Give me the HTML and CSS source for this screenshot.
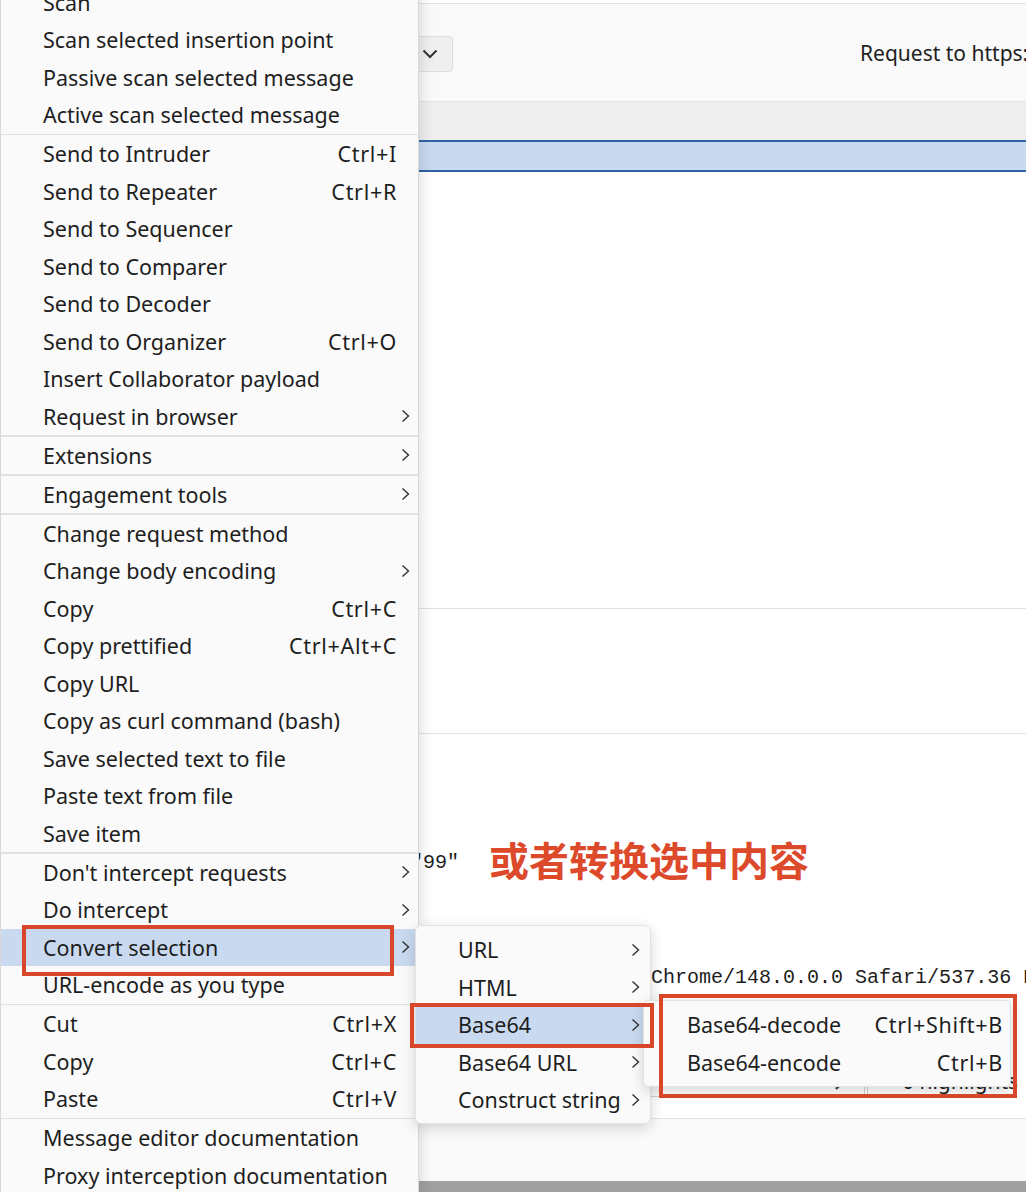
FILE: index.html
```html
<!DOCTYPE html>
<html lang="zh-CN">
<head>
  <meta charset="UTF-8" />
  <meta name="viewport" content="width=device-width, initial-scale=1.0"/>
  <title>Proxy - Intercept</title>
  <link rel="stylesheet" href="styles.css">
</head>
<body>
  <!-- proxy window behind the menus -->
  <div class="app">
    <div class="toolbar">
      <div class="dropdown">
        <svg width="16" height="10" viewBox="0 0 16 10"><polyline points="1.5,1.5 8,8 14.5,1.5" fill="none" stroke="#333" stroke-width="2"/></svg>
      </div>
      <div class="req-title">Request to https://www.example.com:443 [93.184.216.34]</div>
    </div>
    <div class="table-head"></div>
    <div class="table-row selected"></div>
    <div class="table-body"></div>
    <div class="inspector"></div>
    <div class="editor">
      <div class="line">GET / HTTP/2</div>
      <div class="line">Host: example</div>
      <div class="line">Cookie: a=1</div>
      <div class="line">Sec-Ch-Ua: </div>
      <div class="line">", "Not/A)Brand";v="99"</div>
      <div class="line">DNT: 1</div>
      <div class="line">Priority: u=0</div>
      <div class="line">User-Agent: Mozilla/5.0 (Windows NT</div>
      <div class="line">AppleWebKit/537.36 (KHTML, like Gecko) Chrome/148.0.0.0 Safari/537.36 Edg/148.0.0.0</div>
      <div class="line">Accept: */*</div>
    </div>
    <div class="search-row">
      <div class="search-box">
        <span class="search-text">Search</span>
        <svg class="search-icon" width="24" height="24" viewBox="0 0 24 24"><circle cx="14" cy="10" r="7" fill="none" stroke="#444" stroke-width="2"/><line x1="9" y1="15" x2="2" y2="22" stroke="#444" stroke-width="2.4"/></svg>
      </div>
      <div class="highlights">0 highlights</div>
    </div>
    <div class="status"></div>
    <div class="scroll-bar"></div>
  </div>

  <!-- context menu -->
  <div class="menu main-menu">
    <div class="item"><span>Scan</span></div>
    <div class="item"><span>Scan selected insertion point</span></div>
    <div class="item"><span>Passive scan selected message</span></div>
    <div class="item"><span>Active scan selected message</span></div>
    <div class="sep"></div>
    <div class="item"><span>Send to Intruder</span><span class="key">Ctrl+I</span></div>
    <div class="item"><span>Send to Repeater</span><span class="key">Ctrl+R</span></div>
    <div class="item"><span>Send to Sequencer</span></div>
    <div class="item"><span>Send to Comparer</span></div>
    <div class="item"><span>Send to Decoder</span></div>
    <div class="item"><span>Send to Organizer</span><span class="key">Ctrl+O</span></div>
    <div class="item"><span>Insert Collaborator payload</span></div>
    <div class="item sub"><span>Request in browser</span><span class="key"></span><svg class="arrow" width="9" height="14" viewBox="0 0 9 14"><polyline points="1.5,1.5 7.5,7 1.5,12.5"/></svg></div>
    <div class="sep"></div>
    <div class="item sub"><span>Extensions</span><span class="key"></span><svg class="arrow" width="9" height="14" viewBox="0 0 9 14"><polyline points="1.5,1.5 7.5,7 1.5,12.5"/></svg></div>
    <div class="sep"></div>
    <div class="item sub"><span>Engagement tools</span><span class="key"></span><svg class="arrow" width="9" height="14" viewBox="0 0 9 14"><polyline points="1.5,1.5 7.5,7 1.5,12.5"/></svg></div>
    <div class="sep"></div>
    <div class="item"><span>Change request method</span></div>
    <div class="item sub"><span>Change body encoding</span><span class="key"></span><svg class="arrow" width="9" height="14" viewBox="0 0 9 14"><polyline points="1.5,1.5 7.5,7 1.5,12.5"/></svg></div>
    <div class="item"><span>Copy</span><span class="key">Ctrl+C</span></div>
    <div class="item"><span>Copy prettified</span><span class="key">Ctrl+Alt+C</span></div>
    <div class="item"><span>Copy URL</span></div>
    <div class="item"><span>Copy as curl command (bash)</span></div>
    <div class="item"><span>Save selected text to file</span></div>
    <div class="item"><span>Paste text from file</span></div>
    <div class="item"><span>Save item</span></div>
    <div class="sep"></div>
    <div class="item sub"><span>Don't intercept requests</span><span class="key"></span><svg class="arrow" width="9" height="14" viewBox="0 0 9 14"><polyline points="1.5,1.5 7.5,7 1.5,12.5"/></svg></div>
    <div class="item sub"><span>Do intercept</span><span class="key"></span><svg class="arrow" width="9" height="14" viewBox="0 0 9 14"><polyline points="1.5,1.5 7.5,7 1.5,12.5"/></svg></div>
    <div class="item sub active"><span>Convert selection</span><span class="key"></span><svg class="arrow" width="9" height="14" viewBox="0 0 9 14"><polyline points="1.5,1.5 7.5,7 1.5,12.5"/></svg></div>
    <div class="item"><span>URL-encode as you type</span></div>
    <div class="sep"></div>
    <div class="item"><span>Cut</span><span class="key">Ctrl+X</span></div>
    <div class="item"><span>Copy</span><span class="key">Ctrl+C</span></div>
    <div class="item"><span>Paste</span><span class="key">Ctrl+V</span></div>
    <div class="sep"></div>
    <div class="item"><span>Message editor documentation</span></div>
    <div class="item"><span>Proxy interception documentation</span></div>
  </div>

  <!-- Convert selection submenu -->
  <div class="menu convert-menu">
    <div class="item sub"><span>URL</span><span class="key"></span><svg class="arrow" width="9" height="14" viewBox="0 0 9 14"><polyline points="1.5,1.5 7.5,7 1.5,12.5"/></svg></div>
    <div class="item sub"><span>HTML</span><span class="key"></span><svg class="arrow" width="9" height="14" viewBox="0 0 9 14"><polyline points="1.5,1.5 7.5,7 1.5,12.5"/></svg></div>
    <div class="item sub active"><span>Base64</span><span class="key"></span><svg class="arrow" width="9" height="14" viewBox="0 0 9 14"><polyline points="1.5,1.5 7.5,7 1.5,12.5"/></svg></div>
    <div class="item sub"><span>Base64 URL</span><span class="key"></span><svg class="arrow" width="9" height="14" viewBox="0 0 9 14"><polyline points="1.5,1.5 7.5,7 1.5,12.5"/></svg></div>
    <div class="item sub"><span>Construct string</span><span class="key"></span><svg class="arrow" width="9" height="14" viewBox="0 0 9 14"><polyline points="1.5,1.5 7.5,7 1.5,12.5"/></svg></div>
  </div>

  <!-- Base64 submenu -->
  <div class="menu base64-menu">
    <div class="item"><span>Base64-decode</span><span class="key">Ctrl+Shift+B</span></div>
    <div class="item"><span>Base64-encode</span><span class="key">Ctrl+B</span></div>
  </div>

  <!-- annotations -->
  <div class="mark mark-convert"></div>
  <div class="mark mark-base64"></div>
  <div class="mark mark-actions"></div>
  <div class="note">或者转换选中内容</div>
</body>
</html>
```

FILE: styles.css
```css
* {
  box-sizing: border-box;
}
html, body {
  margin: 0;
}
body {
  position: relative;
  width: 1026px;
  height: 1192px;
  overflow: hidden;
  background: #fff;
  font-family: "Noto Sans", "Open Sans", sans-serif;
  font-size: 21.5px;
  color: #1e1e1e;
}

/* proxy window */
.app {
  display: flex;
  flex-direction: column;
  height: 1192px;
}
.toolbar {
  display: flex;
  align-items: center;
  height: 99px;
  margin-top: 3px;
  padding-left: 380px;
  background: #f9f9f9;
  border-top: 1px solid #e3e3e3;
  border-bottom: 1px solid #e3e3e3;
  white-space: nowrap;
  overflow: hidden;
}
.dropdown {
  flex: none;
  display: flex;
  align-items: center;
  justify-content: flex-end;
  width: 73px;
  height: 36px;
  margin-top: 3px;
  padding-right: 14px;
  background: #efefef;
  border: 1px solid #dedede;
  border-radius: 4px;
}
.req-title {
  flex: none;
  margin-left: 407px;
  font-size: 21px;
}
.table-head {
  height: 38px;
  background: #eeeeee;
}
.table-row.selected {
  height: 32px;
  background: #c9daf0;
  border-top: 2px solid #2c65a1;
  border-bottom: 2px solid #2c65a1;
}
.table-body {
  height: 437px;
  border-bottom: 1px solid #e3e3e3;
}
.inspector {
  height: 125px;
  border-bottom: 1px solid #e3e3e3;
}
.editor {
  height: 316px;
  padding-left: 183px;
  font-family: "Liberation Mono", monospace;
  font-size: 20px;
  overflow: hidden;
}
.line {
  height: 28.75px;
  line-height: 28.75px;
  white-space: pre;
}
.search-row {
  display: flex;
  align-items: flex-end;
  height: 69px;
  padding-left: 182px;
  padding-bottom: 21px;
  border-bottom: 1px solid #e3e3e3;
}
.search-box {
  flex: none;
  display: flex;
  align-items: center;
  justify-content: space-between;
  width: 683px;
  height: 42px;
  padding: 0 6px 0 10px;
  border: 1px solid #d4d4d4;
  border-radius: 3px;
  color: #888;
}
.search-icon {
  margin-top: 6px;
}
.highlights {
  flex: none;
  height: 42px;
  margin-left: 2px;
  padding: 12px 0 0 34px;
  border-left: 1px solid #d4d4d4;
  font-size: 21px;
  line-height: 28px;
}
.status {
  height: 62px;
  background: #fafafa;
}
.scroll-bar {
  flex: 1;
  background: #a0a0a0;
}

/* menus */
.menu {
  position: absolute;
  background: #fafafa;
  box-shadow: 0 4px 14px rgba(0, 0, 0, 0.16);
}
.item {
  display: grid;
  grid-template-columns: 1fr auto 21px;
  align-items: center;
  height: 37.5px;
  white-space: nowrap;
}
.key {
  text-align: right;
  letter-spacing: 0.7px;
}
.arrow {
  margin-left: 4px;
}
.arrow polyline {
  fill: none;
  stroke: #333;
  stroke-width: 1.4;
}
.item.active {
  background: #c9daf0;
}
.sep {
  height: 1.5px;
  background: #e1e1e1;
}
.main-menu {
  left: 0;
  top: -16.5px;
  width: 419px;
  border-left: 1px solid #d8d8d8;
  border-right: 1px solid #d8d8d8;
}
.main-menu .item {
  padding-left: 42px;
}
.convert-menu {
  left: 415px;
  top: 925px;
  width: 236px;
  padding: 5px 0 4px;
  border: 1px solid #e2e2e2;
  border-radius: 6px;
}
.convert-menu .item {
  padding-left: 42px;
  padding-right: 2px;
}
.base64-menu {
  left: 643px;
  top: 1000px;
  width: 368px;
  padding: 5px 0;
  border: 1px solid #e2e2e2;
  border-radius: 6px;
}
.base64-menu .item {
  grid-template-columns: 1fr auto;
  padding-left: 43px;
  padding-right: 7px;
}

/* red callouts */
.mark {
  position: absolute;
  border: 4px solid #d9472b;
}
.mark-convert {
  left: 22px;
  top: 925px;
  width: 372px;
  height: 51px;
}
.mark-base64 {
  left: 410px;
  top: 1003px;
  width: 244px;
  height: 45px;
}
.mark-actions {
  left: 659px;
  top: 994px;
  width: 358px;
  height: 104px;
}
.note {
  position: absolute;
  left: 489px;
  top: 833px;
  font-family: "Noto Sans CJK SC", sans-serif;
  font-size: 40px;
  font-weight: 700;
  line-height: 52px;
  color: #dc4a2b;
}
```
